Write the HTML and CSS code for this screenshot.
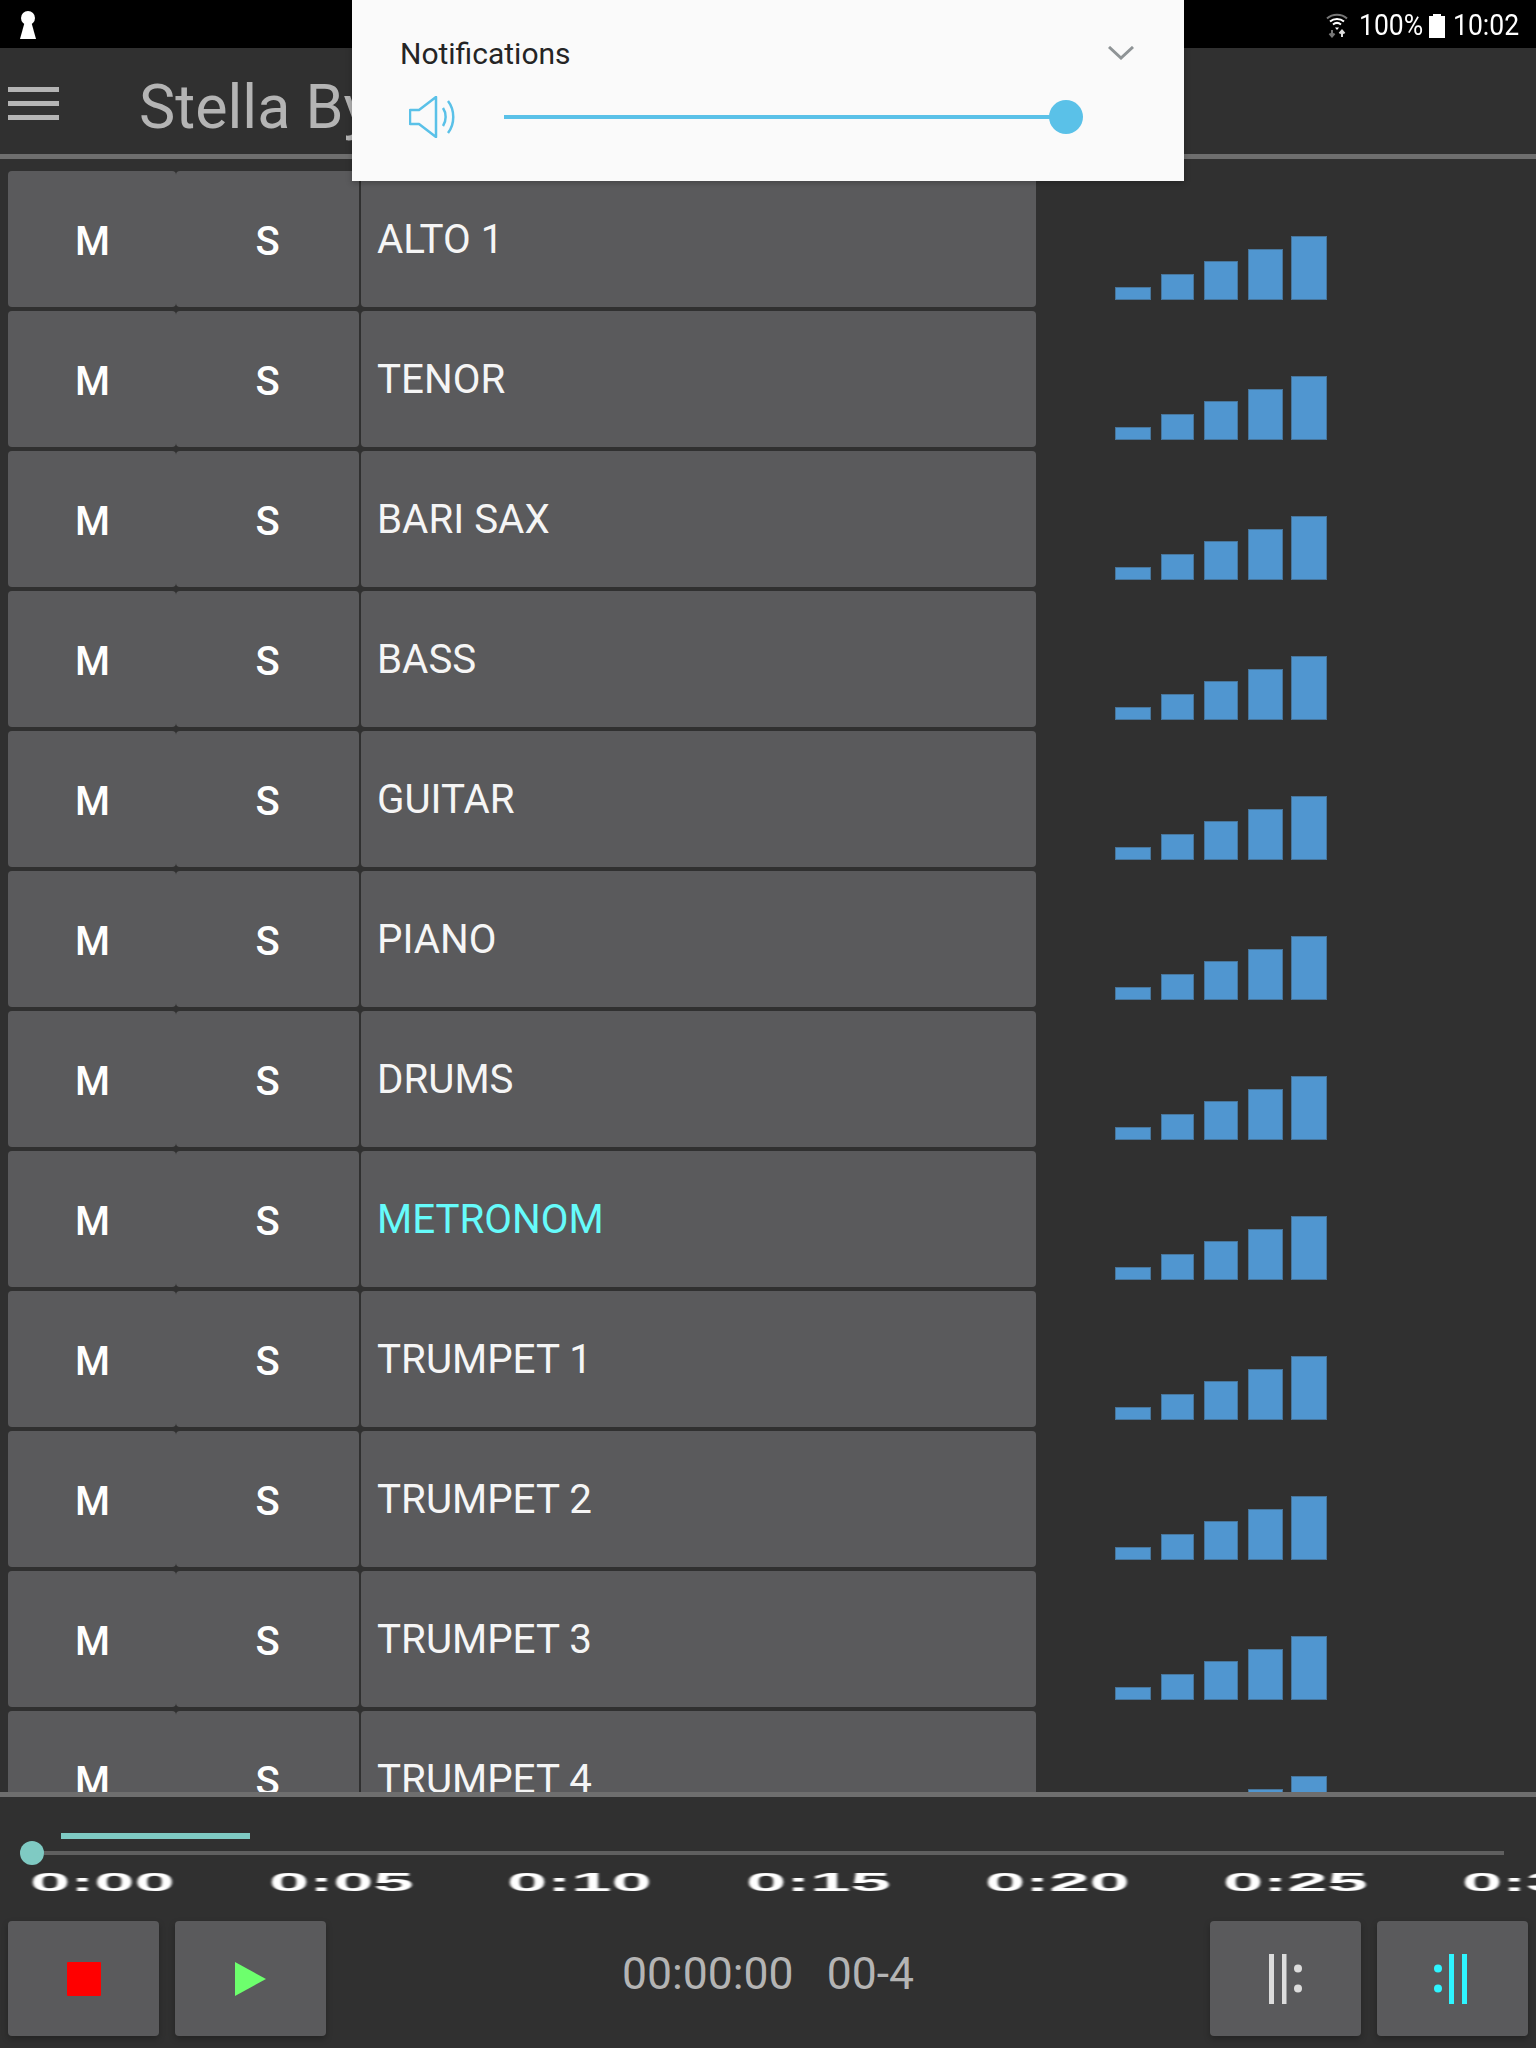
FILE: index.html
```html
<!DOCTYPE html>
<html lang="en">
<head>
  <meta charset="UTF-8">
  <title>Stella By Starlight</title>
  <link rel="stylesheet" href="styles.css">
</head>
<body>
  <div class="app">
    <!-- status bar -->
    <div class="statusbar">
      <svg class="keyhole" width="16" height="28" viewBox="0 0 16 28"><circle cx="8" cy="7" r="7" fill="#fff"/><path d="M5 10h6l5 18H0z" fill="#fff"/></svg>
      <div class="status-right">
        <svg class="wifi" width="22" height="26" viewBox="0 0 22 26" fill="none">
          <path d="M1 6.500C6.500 1.500 15.500 1.500 21 6.500" stroke="#777" stroke-width="2"/>
          <path d="M4 9.500C8 6 14 6 18 9.500" stroke="#fff" stroke-width="2"/>
          <path d="M7 12.500C9.500 10.500 12.500 10.500 15 12.500" stroke="#fff" stroke-width="2"/>
          <path d="M9 15.500h4l-2 2.500z" fill="#fff"/>
          <path d="M6 18v6M3.500 21.500l2.500 3 2.500-3" stroke="#777" stroke-width="2"/>
          <path d="M16 25v-6M13.500 21.500l2.500-3 2.500 3" stroke="#ddd" stroke-width="2"/>
        </svg>
        <span class="status-text pct">100%</span>
        <svg class="battery" width="16" height="24" viewBox="0 0 16 24"><path d="M4 0h8v2h4v22H0V2h4z" fill="#fff"/></svg>
        <span class="status-text clock">10:02</span>
      </div>
    </div>

    <!-- title bar -->
    <div class="header">
      <div class="menu-icon"><span></span><span></span><span></span></div>
      <div class="title">Stella By Starlight</div>
    </div>

    <!-- tracks -->
    <div class="tracks">
      <div class="track"><div class="btn-m">M</div><div class="btn-s">S</div><div class="name">ALTO 1</div><div class="meter"><i></i><i></i><i></i><i></i><i></i></div></div>
      <div class="track"><div class="btn-m">M</div><div class="btn-s">S</div><div class="name">TENOR</div><div class="meter"><i></i><i></i><i></i><i></i><i></i></div></div>
      <div class="track"><div class="btn-m">M</div><div class="btn-s">S</div><div class="name">BARI SAX</div><div class="meter"><i></i><i></i><i></i><i></i><i></i></div></div>
      <div class="track"><div class="btn-m">M</div><div class="btn-s">S</div><div class="name">BASS</div><div class="meter"><i></i><i></i><i></i><i></i><i></i></div></div>
      <div class="track"><div class="btn-m">M</div><div class="btn-s">S</div><div class="name">GUITAR</div><div class="meter"><i></i><i></i><i></i><i></i><i></i></div></div>
      <div class="track"><div class="btn-m">M</div><div class="btn-s">S</div><div class="name">PIANO</div><div class="meter"><i></i><i></i><i></i><i></i><i></i></div></div>
      <div class="track"><div class="btn-m">M</div><div class="btn-s">S</div><div class="name">DRUMS</div><div class="meter"><i></i><i></i><i></i><i></i><i></i></div></div>
      <div class="track"><div class="btn-m">M</div><div class="btn-s">S</div><div class="name active">METRONOM</div><div class="meter"><i></i><i></i><i></i><i></i><i></i></div></div>
      <div class="track"><div class="btn-m">M</div><div class="btn-s">S</div><div class="name">TRUMPET 1</div><div class="meter"><i></i><i></i><i></i><i></i><i></i></div></div>
      <div class="track"><div class="btn-m">M</div><div class="btn-s">S</div><div class="name">TRUMPET 2</div><div class="meter"><i></i><i></i><i></i><i></i><i></i></div></div>
      <div class="track"><div class="btn-m">M</div><div class="btn-s">S</div><div class="name">TRUMPET 3</div><div class="meter"><i></i><i></i><i></i><i></i><i></i></div></div>
      <div class="track"><div class="btn-m">M</div><div class="btn-s">S</div><div class="name">TRUMPET 4</div><div class="meter"><i></i><i></i><i></i><i></i><i></i></div></div>
    </div>

    <!-- transport -->
    <div class="footer">
      <div class="loop-range"></div>
      <div class="seek"><div class="seek-thumb"></div><div class="seek-track"></div></div>
      <div class="ruler">
        <div class="tick"><span>0:00</span></div>
        <div class="tick"><span>0:05</span></div>
        <div class="tick"><span>0:10</span></div>
        <div class="tick"><span>0:15</span></div>
        <div class="tick"><span>0:20</span></div>
        <div class="tick"><span>0:25</span></div>
        <div class="tick"><span>0:30</span></div>
      </div>
      <div class="controls">
        <div class="ctl"><div class="stop"></div></div>
        <div class="ctl"><svg width="31" height="34" viewBox="0 0 31 34"><path d="M0 0l31 17L0 34z" fill="#6dff6d"/></svg></div>
        <div class="time">00:00:00   00-4</div>
        <div class="ctl">
          <svg width="34" height="50" viewBox="0 0 34 50" fill="#dcdcdc"><rect x="0" y="0" width="5" height="50"/><rect x="13" y="0" width="4.500" height="50"/><circle cx="29" cy="14.500" r="4"/><circle cx="29" cy="34.500" r="4"/></svg>
        </div>
        <div class="ctl">
          <svg class="repeat-end" width="34" height="50" viewBox="0 0 34 50" fill="#2ef5ff"><circle cx="5" cy="14.500" r="4"/><circle cx="5" cy="34.500" r="4"/><rect x="16" y="0" width="5" height="50"/><rect x="29" y="0" width="5" height="50"/></svg>
        </div>
      </div>
    </div>

    <!-- volume panel over the title bar -->
    <div class="volume-panel">
      <div class="panel-top">
        <span class="panel-label">Notifications</span>
        <svg class="chevron" width="26" height="14" viewBox="0 0 26 14" fill="none"><path d="M1 1l12 11L25 1" stroke="#8f9496" stroke-width="3"/></svg>
      </div>
      <div class="panel-slider">
        <svg class="speaker" width="48" height="42" viewBox="0 0 48 42" fill="none" stroke="#5ac1e8" stroke-width="2.500">
          <path d="M1 14h9L27 1v40L10 28H1z" stroke-linejoin="round"/>
          <path d="M34 12c3.500 5 3.500 13 0 18"/>
          <path d="M39 5c7 9 7 23 0 32"/>
        </svg>
        <div class="slider-line"></div>
        <div class="slider-thumb"></div>
      </div>
    </div>
  </div>
</body>
</html>
```
FILE: styles.css
```css
body {
  margin: 0;
  padding: 0;
  background: #303030;
  font-family: Roboto, "Liberation Sans", sans-serif;
}

.app {
  position: relative;
  width: 1536px;
  height: 2048px;
  display: flex;
  flex-direction: column;
  overflow: hidden;
}

/* status bar */
.statusbar {
  height: 48px;
  flex: none;
  background: #000;
  display: flex;
  align-items: center;
  justify-content: space-between;
  padding: 0 17px 0 20px;
}
.keyhole {
  margin-top: 2px;
}
.status-right {
  display: flex;
  align-items: center;
}
.status-text {
  color: #fff;
  font-size: 30px;
  line-height: 48px;
  padding-top: 2px;
  transform: scaleX(0.885);
  transform-origin: left center;
}
.pct {
  width: 70px;
  margin-left: 11px;
}
.clock {
  width: 66px;
  margin-left: 8px;
}
.wifi {
  margin-top: 1px;
}
.battery {
  margin-top: 3px;
}

/* title bar */
.header {
  height: 106px;
  flex: none;
  display: flex;
  align-items: center;
  border-bottom: 5px solid #6e6e6e;
}
.menu-icon {
  width: 51px;
  margin-left: 8px;
  margin-top: 5px;
  display: flex;
  flex-direction: column;
  gap: 9px;
}
.menu-icon span {
  height: 5px;
  background: #b4b4b4;
}
.title {
  margin-left: 80px;
  margin-top: 12px;
  font-size: 61px;
  color: #b4b4b4;
  white-space: nowrap;
}

/* tracks */
.tracks {
  flex: 1;
  min-height: 0;
  overflow: hidden;
  padding: 12px 0 0 8px;
}
.track {
  display: flex;
  height: 136px;
  margin-bottom: 4px;
}
.btn-m, .btn-s {
  background: #5a5a5c;
  border-radius: 4px;
  color: #fff;
  font-size: 40px;
  font-weight: 500;
  display: flex;
  align-items: center;
  justify-content: center;
  padding-top: 5px;
  box-sizing: border-box;
}
.btn-m {
  width: 168px;
  padding-left: 1px;
}
.btn-s {
  width: 183px;
}
.name {
  width: 675px;
  margin-left: 2px;
  background: #5a5a5c;
  border-radius: 4px;
  color: #f5f5f5;
  font-size: 40.3px;
  line-height: 138px;
  padding-left: 16px;
  box-sizing: border-box;
}
.name.active {
  color: #66fbfb;
}
.meter {
  margin-left: 79px;
  padding-bottom: 7px;
  display: flex;
  align-items: flex-end;
}
.meter i {
  display: block;
  background: #5096d0;
  border: 1px solid #47759b;
  box-sizing: border-box;
}
.meter i:nth-child(1) { width: 36px; height: 13px; margin-right: 10px; }
.meter i:nth-child(2) { width: 33px; height: 26px; margin-right: 10px; }
.meter i:nth-child(3) { width: 34px; height: 39px; margin-right: 10px; }
.meter i:nth-child(4) { width: 35px; height: 51px; margin-right: 8px; }
.meter i:nth-child(5) { width: 36px; height: 64px; }

/* transport */
.footer {
  flex: none;
  height: 256px;
  box-sizing: border-box;
  border-top: 5px solid #6e6e6e;
  padding-top: 36px;
}
.loop-range {
  width: 189px;
  height: 6px;
  margin-left: 61px;
  background: #7fcac3;
}
.seek {
  display: flex;
  align-items: center;
  margin: 2px 0 0 20px;
}
.seek-thumb {
  width: 24px;
  height: 24px;
  border-radius: 50%;
  background: #7fcac3;
  flex: none;
}
.seek-track {
  width: 1460px;
  height: 4px;
  background: #5f5f5f;
}
.ruler {
  display: flex;
  height: 56px;
  padding-left: 30px;
  overflow: hidden;
}
.tick {
  width: 238.7px;
  flex: none;
}
.tick span {
  display: block;
  margin-top: 2px;
  font-family: "Liberation Sans", sans-serif;
  font-weight: bold;
  font-size: 26px;
  line-height: 30px;
  color: #fff;
  white-space: nowrap;
  transform: scaleX(2.78);
  transform-origin: left center;
  filter: blur(0.5px);
}
.controls {
  display: flex;
  align-items: center;
  padding: 0 8px;
}
.ctl {
  width: 151px;
  height: 115px;
  flex: none;
  background: #5a5a5c;
  border-radius: 4px;
  box-shadow: 0 3px 6px rgba(0,0,0,0.25);
  display: flex;
  align-items: center;
  justify-content: center;
}
.ctl + .ctl {
  margin-left: 16px;
}
.repeat-end {
  margin-right: 5px;
}
.stop {
  width: 34px;
  height: 34px;
  background: #ff0000;
  border-radius: 1px;
}
.time {
  flex: 1;
  text-align: center;
  white-space: pre;
  color: #b4b4b4;
  font-size: 44.5px;
  padding-bottom: 10px;
}

/* volume panel */
.volume-panel {
  position: absolute;
  top: 0;
  left: 352px;
  width: 832px;
  height: 181px;
  background: #fafafa;
  box-shadow: 0 2px 6px rgba(0,0,0,0.25);
}
.panel-top {
  display: flex;
  align-items: center;
  justify-content: space-between;
  padding: 35px 50px 0 48px;
  height: 36px;
}
.panel-label {
  color: #252525;
  font-size: 30px;
}
.panel-slider {
  display: flex;
  align-items: center;
  padding-left: 57px;
  margin-top: 25px;
}
.slider-line {
  width: 546px;
  height: 4px;
  margin-left: 47px;
  background: #5ac1e8;
}
.slider-thumb {
  width: 34px;
  height: 34px;
  margin-left: -1px;
  border-radius: 50%;
  background: #5ac1e8;
}
```
